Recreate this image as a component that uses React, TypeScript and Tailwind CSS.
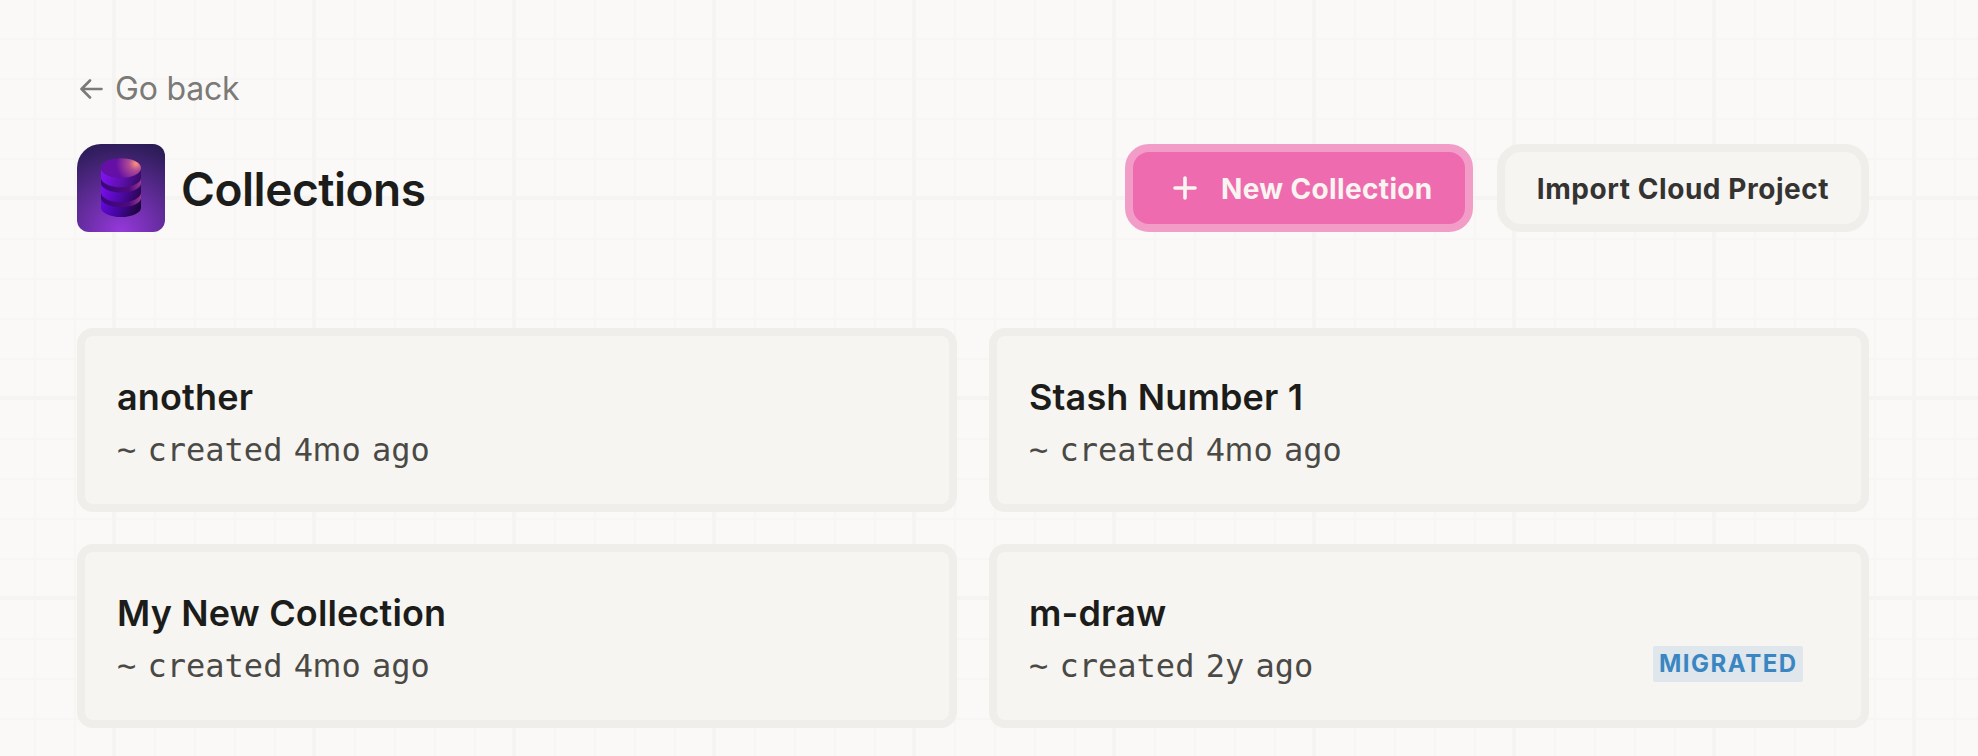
const collections = [
  { name: "another", amount: "4", unit: "mo", migrated: false },
  { name: "Stash Number 1", amount: "4", unit: "mo", migrated: false },
  { name: "My New Collection", amount: "4", unit: "mo", migrated: false },
  { name: "m-draw", amount: "2", unit: "y", migrated: true },
];

const DISC_SIDE = "v9.7a20 9.6 0 0 0 40 0v-9.7a20 9.6 0 0 1 -40 0z";

function CollectionsIcon() {
  return (
    <svg viewBox="0 0 88 88" className="size-22 shrink-0 rounded-xl rounded-tl-3xl">
      <defs>
        <radialGradient id="bg" gradientUnits="userSpaceOnUse" cx="44" cy="88" r="92">
          <stop offset="0" stopColor="#9638dc" />
          <stop offset="0.5" stopColor="#602b98" />
          <stop offset="1" stopColor="#2a1c55" />
        </radialGradient>
        <radialGradient id="top" gradientUnits="userSpaceOnUse" cx="59" cy="19.5" r="20">
          <stop offset="0" stopColor="#ff9180" />
          <stop offset="0.35" stopColor="#b04c92" />
          <stop offset="1" stopColor="#650fa6" />
        </radialGradient>
        <linearGradient id="side" x1="0" y1="0.3" x2="1" y2="0.5">
          <stop offset="0" stopColor="#8312f5" />
          <stop offset="0.55" stopColor="#5f10b0" />
          <stop offset="1" stopColor="#3a0a68" />
        </linearGradient>
        <linearGradient id="mid" x1="0" y1="0.3" x2="1" y2="0.5">
          <stop offset="0" stopColor="#7a0df0" />
          <stop offset="0.55" stopColor="#4e08a8" />
          <stop offset="1" stopColor="#2b0653" />
        </linearGradient>
        <linearGradient id="low" x1="0" y1="0.3" x2="1" y2="0.5">
          <stop offset="0" stopColor="#6508dd" />
          <stop offset="0.5" stopColor="#43069b" />
          <stop offset="1" stopColor="#1c0638" />
        </linearGradient>
        <linearGradient id="gap" x1="0" x2="1">
          <stop offset="0" stopColor="#38067c" />
          <stop offset="0.7" stopColor="#50097e" />
          <stop offset="1" stopColor="#9c3792" />
        </linearGradient>
      </defs>
      <rect width="88" height="88" fill="url(#bg)" />
      <path d="M24 30v28a20 9.6 0 0 0 40 0V30z" fill="url(#gap)" />
      <path d={"M24 53.8" + DISC_SIDE} fill="url(#low)" />
      <path d={"M24 38.9" + DISC_SIDE} fill="url(#mid)" />
      <path d={"M24 24" + DISC_SIDE} fill="url(#side)" />
      <ellipse cx="44" cy="24" rx="20" ry="9.8" fill="url(#top)" />
    </svg>
  );
}

function Unit({ unit }: { unit: string }) {
  if (unit !== "mo") return <>{unit}</>;
  return (
    <>
      <span className="font-['Inter',sans-serif] leading-none tracking-[0.5px]">m</span>o
    </>
  );
}

export default function App() {
  return (
    <div className="h-[756px] overflow-hidden bg-[#faf9f7] bg-[linear-gradient(to_right,#f5f4f2_4px,transparent_4px),linear-gradient(to_bottom,#f5f4f2_4px,transparent_4px),linear-gradient(to_right,#f7f6f4_2px,transparent_2px),linear-gradient(to_bottom,#f7f6f4_2px,transparent_2px)] bg-[size:200px_200px,200px_200px,40px_40px,40px_40px] bg-[position:112px_0,0_196px,34px_0,0_38px] pt-[67px] pr-[109px] pl-[77px] font-['Inter',sans-serif]">
      <a className="flex h-11 items-center text-[32px] tracking-[-0.2px] text-[#7b7a76]">
        <svg viewBox="0 0 24 20" className="ml-[3px] h-5 w-6" fill="none" stroke="currentColor" strokeWidth="2.6" strokeLinecap="round" strokeLinejoin="round">
          <path d="M10 1.5 1.5 10l8.5 8.5M1.5 10h20" />
        </svg>
        <span className="ml-[11px]">Go back</span>
      </a>
      <header className="mt-[33px] flex h-22 items-center">
        <CollectionsIcon />
        <h1 className="ml-4 pt-px text-[46px] leading-none font-semibold tracking-[-0.01em] text-[#1c1c1b]">Collections</h1>
        <div className="ml-auto flex gap-6 text-[28px] font-bold">
          <button className="flex h-22 w-[348px] items-center rounded-3xl border-8 border-[#f29dc8] bg-[#ef6bb0] pl-10 tracking-[0.35px] whitespace-nowrap text-[#f8f5f0]">
            <svg viewBox="0 0 24 24" className="size-6" fill="none" stroke="currentColor" strokeWidth="3.6" strokeLinecap="round">
              <path d="M12 2v20M2 12h20" />
            </svg>
            <span className="ml-6 pt-0.5">New Collection</span>
          </button>
          <button className="h-22 w-[372px] rounded-3xl border-8 border-[#efeeea] bg-[#f6f5f1] pt-0.5 tracking-[0.55px] whitespace-nowrap text-[#343331]">Import Cloud Project</button>
        </div>
      </header>
      <main className="mt-24 grid grid-cols-2 gap-8">
        {collections.map((c) => (
          <article key={c.name} className="flex h-46 items-end justify-between rounded-2xl border-8 border-[#efeeea] bg-[#f6f5f1] pr-[58px] pb-7 pl-8">
            <div>
              <h2 className="mb-px text-[36px] leading-[52px] font-semibold tracking-[0.15px] text-[#1c1c1b]">{c.name}</h2>
              <p className="font-['DejaVu_Sans_Mono',monospace] text-[32px] leading-[52px] [word-spacing:-8px] text-[#4a4945]">
                ~ created {c.amount}
                <Unit unit={c.unit} /> ago
              </p>
            </div>
            {c.migrated && (
              <span className="mb-2.5 flex h-9 w-[150px] items-center rounded-xs bg-[#dfe6ec] pl-[6px] text-[24px] font-bold tracking-[1.5px] text-[#3a86c2]">MIGRATED</span>
            )}
          </article>
        ))}
      </main>
    </div>
  );
}
